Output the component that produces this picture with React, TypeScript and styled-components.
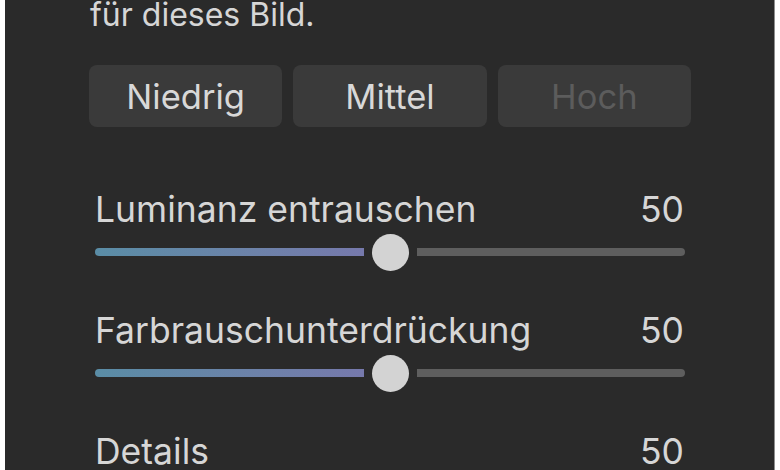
import { useState } from 'react'
import styled, { createGlobalStyle } from 'styled-components'

const GlobalStyle = createGlobalStyle`
	html, body {
		margin: 0;
		padding: 0;
		background: #ffffff;
	}
	body {
		font-family: Inter, 'Noto Sans', 'Liberation Sans', sans-serif;
		-webkit-font-smoothing: antialiased;
	}
`

const levels = ['Niedrig', 'Mittel', 'Hoch']

const sliders = [
	{ label: 'Luminanz entrauschen', value: 50 },
	{ label: 'Farbrauschunterdrückung', value: 50 },
	{ label: 'Details', value: 50 },
]

const THUMB = 37
const GAP = 8
const TRACK = 590

export default function App() {
	const [level] = useState('Hoch')

	return (
		<>
			<GlobalStyle />
			<Panel>
				<Column>
					<Description>für dieses Bild.</Description>
					<Segments>
						{levels.map(l => (
							<Segment key={l} disabled={l === level}>
								{l}
							</Segment>
						))}
					</Segments>
					<Sliders>
						{sliders.map((s, i) => (
							<SliderBlock key={s.label}>
								<LabelRow>
									<Label>{s.label}</Label>
									<Value>{s.value}</Value>
								</LabelRow>
								{i < sliders.length - 1 && <Slider value={s.value} />}
							</SliderBlock>
						))}
					</Sliders>
				</Column>
			</Panel>
		</>
	)
}

const Slider = ({ value }: { value: number }) => {
	const usable = TRACK - THUMB - GAP * 2
	const filled = (usable * value) / 100
	return (
		<TrackRow>
			<Filled style={{ width: filled }} />
			<Thumb />
			<Empty />
		</TrackRow>
	)
}

const Panel = styled.div`
	box-sizing: border-box;
	margin-left: 5px;
	width: 770px;
	height: 470px;
	overflow: hidden;
	background: #2a2a2a;
	border-right: 1px solid #8e8e8e;
	padding-left: 84px;
`

const Column = styled.div`
	width: 602px;
	display: flex;
	flex-direction: column;
`

const Description = styled.div`
	margin-top: -3px;
	font-size: 32px;
	line-height: 36px;
	color: #d6d6d6;
	padding-left: 1px;
`

const Segments = styled.div`
	margin-top: 32px;
	display: grid;
	grid-template-columns: repeat(3, 1fr);
	gap: 11px;
`

const Segment = styled.div<{ disabled?: boolean }>`
	height: 62px;
	border-radius: 8px;
	background: #3a3a3a;
	display: flex;
	align-items: center;
	justify-content: center;
	font-size: 34.5px;
	color: ${({ disabled }) => (disabled ? '#5c5c5c' : '#d8d8d8')};
`

const Sliders = styled.div`
	margin-top: 63px;
	padding: 0 6px;
	display: flex;
	flex-direction: column;
	gap: 40px;
`

const SliderBlock = styled.div`
	display: flex;
	flex-direction: column;
	gap: 3px;
`

const LabelRow = styled.div`
	display: flex;
	justify-content: space-between;
	align-items: baseline;
	height: 40px;
	line-height: 40px;
	font-size: 35.5px;
	color: #d6d6d6;
`

const Label = styled.span``

const Value = styled.span`
	padding-right: 1px;
`

const TrackRow = styled.div`
	display: flex;
	align-items: center;
	gap: ${GAP}px;
	height: 38px;
	width: ${TRACK}px;
`

const Filled = styled.div`
	height: 8px;
	border-radius: 4px 0 0 4px;
	background: linear-gradient(90deg, #5a8da6 0%, #6d82a9 60%, #7679ac 100%);
`

const Thumb = styled.div`
	flex: none;
	width: ${THUMB}px;
	height: ${THUMB}px;
	border-radius: 50%;
	background: #d3d3d3;
`

const Empty = styled.div`
	flex: 1;
	height: 8px;
	border-radius: 0 4px 4px 0;
	background: #5e5e5e;
`
